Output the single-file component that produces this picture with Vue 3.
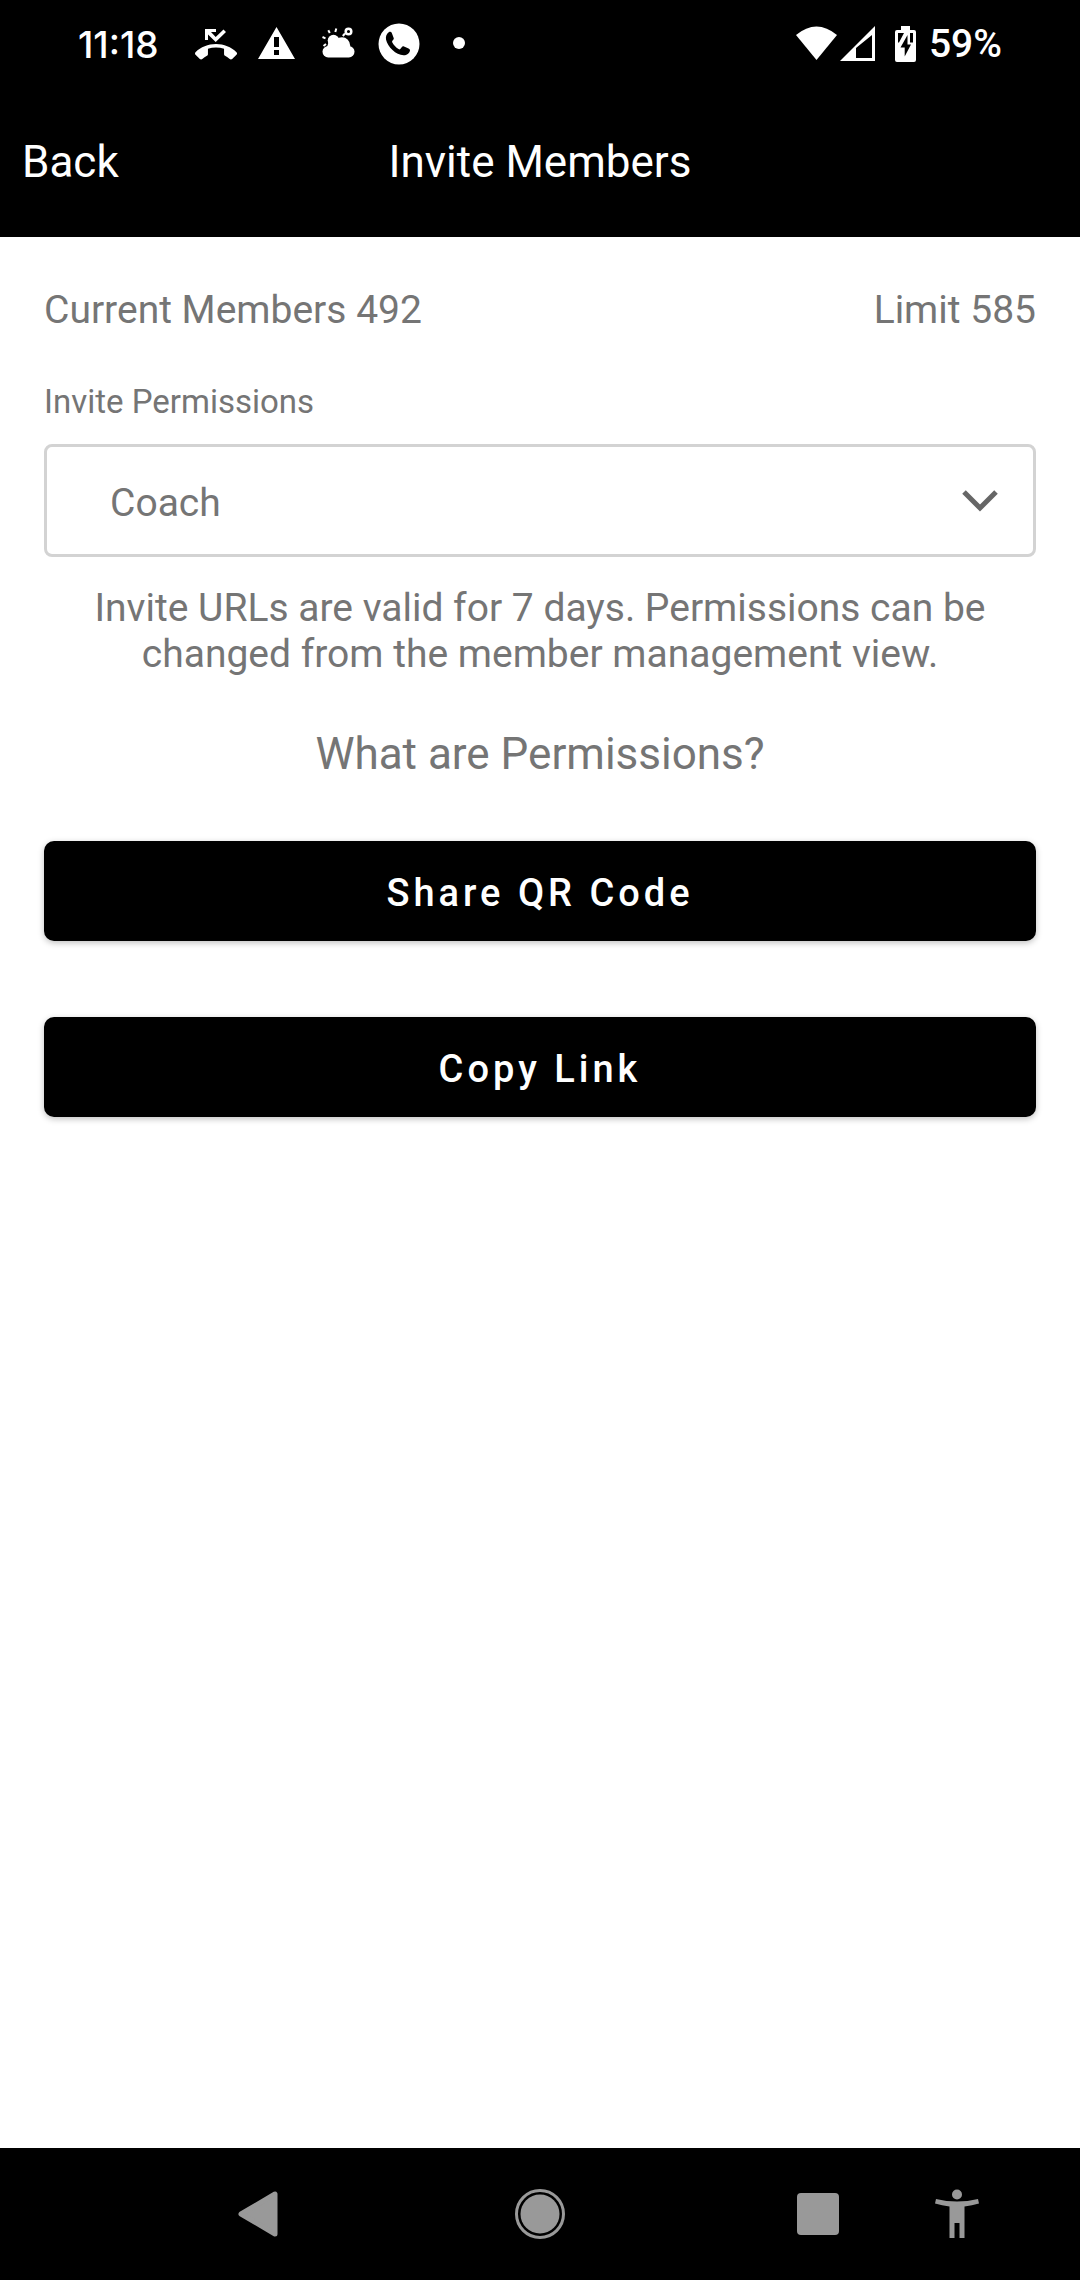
<script setup>
import { ref } from 'vue'

const permission = ref('Coach')
const permissions = ['Coach']
</script>

<template>
  <div class="screen">
    <div class="status">
      <div class="status-left">
        <span class="clock">11:18</span>
        <div class="notifications">
          <svg class="glyph" viewBox="0 0 42 42" aria-hidden="true">
            <path d="M10 6H21V9H16L20.700 14L28.500 6.500L31 9L20.700 19L13 11.500V17H10Z" />
            <path transform="scale(1.75)" d="M23.710 16.670C20.660 13.780 16.540 12 12 12 7.460 12 3.340 13.780.290 16.670c-.180.180-.290.430-.290.710 0 .280.110.530.290.710l2.480 2.480c.180.180.430.290.710.290.270 0 .520-.110.700-.280.790-.740 1.690-1.360 2.660-1.850.330-.160.560-.500.560-.900v-3.100c1.450-.480 3-.730 4.600-.730 1.600 0 3.150.250 4.600.720v3.100c0 .390.230.740.560.900.980.490 1.870 1.120 2.670 1.850.180.180.430.280.700.280.280 0 .530-.110.710-.290l2.480-2.480c.180-.180.290-.430.290-.710 0-.280-.120-.520-.300-.700z" />
          </svg>
          <svg class="glyph" viewBox="0 0 42 42" aria-hidden="true">
            <path fill-rule="evenodd" d="M20.500 4L39 36H2zM18 14v10h5V14zM18 27v5h5v-5z" />
          </svg>
          <svg class="glyph" viewBox="0 0 42 42" aria-hidden="true">
            <rect x="5.500" y="23" width="32" height="11.500" rx="5.700" />
            <circle cx="16.500" cy="17.500" r="5.800" />
            <circle cx="25" cy="22.500" r="8.200" />
            <path d="M10 24L12 18H30V28H10Z" />
            <path class="line thin" d="M5.500 14L8.500 15.300M11.300 7.300L12.800 10M19.300 5.500L18.300 9M25.800 13L28 10.500M6.500 23L9 21" />
            <circle class="line" cx="31.500" cy="8.500" r="2.800" />
          </svg>
          <svg class="glyph" viewBox="0 0 42 42" aria-hidden="true">
            <circle cx="21" cy="21" r="20.500" />
            <path class="cut" d="M11 9C8.500 10.500 7.500 13.500 8 16.500C9.500 24 18 32 25.500 32.300C28.500 32.500 31.500 30.500 32 27.500C32 26.500 31.500 26 30 25.300L26 23.500C25 23 24.300 23.500 23.500 24.500L22.300 26C21.800 26.500 21.300 26.500 20.500 26C18 24.500 15.500 22 14.200 19.300C13.900 18.500 14.200 18 14.800 17.300C15.500 16.500 16 16 15.700 15L13.800 10C13.300 8.700 12.300 8.400 11 9Z" />
          </svg>
          <svg class="glyph" viewBox="0 0 42 42" aria-hidden="true">
            <circle cx="20" cy="20" r="6" />
          </svg>
        </div>
      </div>
      <div class="status-right">
        <svg class="radio" viewBox="0 0 80 36" aria-hidden="true">
          <path d="M0 9Q20.500 -8 41 9L20.500 34Z" />
          <path fill-rule="evenodd" d="M44 35L79 0V35ZM60 22V32H76V9Z" />
        </svg>
        <svg class="battery" viewBox="0 0 21 36" aria-hidden="true">
          <path d="M6 0h9v4h4q2 0 2 2v28q0 2-2 2H2q-2 0-2-2V6q0-2 2-2h4z" />
          <path class="cut" d="M3 7H9L4 16.500H3ZM15 7H18V16.500H15ZM12.500 9V18.500H16L9.700 30.500V21.500H5.500Z" />
        </svg>
        <span class="level">59%</span>
      </div>
    </div>

    <header class="bar">
      <a class="back" href="#">Back</a>
      <h1 class="title">Invite Members</h1>
    </header>

    <main class="content">
      <div class="counts">
        <span>Current Members 492</span>
        <span>Limit 585</span>
      </div>
      <label class="label" for="permission">Invite Permissions</label>
      <div class="field">
        <select id="permission" v-model="permission" class="select">
          <option v-for="p in permissions" :key="p">{{ p }}</option>
        </select>
        <svg class="chevron" viewBox="0 0 36 22" aria-hidden="true">
          <path d="M2 2L18 18L34 2" />
        </svg>
      </div>
      <p class="note">Invite URLs are valid for 7 days. Permissions can be changed from the member management view.</p>
      <a class="help" href="#">What are Permissions?</a>
      <button class="action" type="button">Share QR Code</button>
      <button class="action" type="button">Copy Link</button>
    </main>

    <nav class="nav">
      <button class="key back-key" type="button" aria-label="Back">
        <svg viewBox="0 0 50 50"><path class="round" d="M40 5V45L6 25Z" /></svg>
      </button>
      <button class="key home-key" type="button" aria-label="Home">
        <svg viewBox="0 0 50 50"><circle cx="25" cy="25" r="19.500" /><circle class="ring" cx="25" cy="25" r="23.500" /></svg>
      </button>
      <button class="key recent-key" type="button" aria-label="Recent apps">
        <svg viewBox="0 0 50 50"><rect x="4" y="4" width="42" height="42" rx="4" /></svg>
      </button>
      <button class="key access-key" type="button" aria-label="Accessibility">
        <svg viewBox="0 0 50 50">
          <circle cx="25" cy="5.500" r="5" />
          <path d="M4 10Q25 15 46 10L47 14.500Q40 16.500 32.500 17.500V49H27.500V34H22.500V49H17.500V17.500Q10 16.500 3 14.500Z" />
        </svg>
      </button>
    </nav>
  </div>
</template>

<style>
body {
  margin: 0;
  background: #fff;
}
</style>

<style scoped>
.screen {
  display: flex;
  flex-direction: column;
  min-height: 100vh;
  font-family: Roboto, "Liberation Sans", sans-serif;
  font-size: 39px;
  color: #757575;
  background: #fff;
}

.status {
  display: flex;
  justify-content: space-between;
  align-items: center;
  height: 88px;
  padding: 0 78px;
  color: #fff;
  background: #000;
}

.status-left,
.status-right,
.notifications {
  display: flex;
  align-items: center;
}

.clock {
  min-width: 117px;
  font-family: Inter, Roboto, sans-serif;
  font-size: 37px;
  font-weight: 500;
}

.notifications {
  gap: 19px;
}

.glyph {
  width: 42px;
  height: 42px;
  fill: #fff;
}

.line {
  fill: none;
  stroke: #fff;
  stroke-width: 2.5;
}

.thin {
  stroke-width: 2;
}

.cut {
  fill: #000;
}

.radio {
  width: 80px;
  height: 36px;
  margin-right: 19px;
  fill: #fff;
}

.battery {
  width: 21px;
  height: 36px;
  margin-right: 13px;
  fill: #fff;
}

.level {
  font-weight: 500;
}

.bar {
  display: grid;
  grid-template-columns: 1fr auto 1fr;
  align-items: center;
  box-sizing: border-box;
  height: 149px;
  padding: 0 22px 2px;
  font-size: 44px;
  color: #fff;
  background: #000;
}

.back {
  color: inherit;
  text-decoration: none;
}

.title {
  margin: 0;
  font-size: 44px;
  font-weight: 400;
}

.content {
  display: flex;
  flex: 1;
  flex-direction: column;
  padding: 50px 44px 0;
}

.counts {
  display: flex;
  justify-content: space-between;
  line-height: 46px;
}

.label {
  margin-top: 49px;
  font-size: 33px;
  line-height: 40px;
}

.field {
  display: grid;
  align-items: center;
  margin-top: 22px;
}

.select {
  grid-area: 1 / 1;
  width: 100%;
  height: 113px;
  padding: 4px 63px 0;
  border: 3px solid #d3d3d3;
  border-radius: 8px;
  font: inherit;
  color: inherit;
  background: transparent;
  appearance: none;
}

.chevron {
  grid-area: 1 / 1;
  justify-self: end;
  width: 36px;
  height: 22px;
  margin-right: 38px;
  fill: none;
  stroke: #666;
  stroke-width: 5;
  pointer-events: none;
}

.note {
  margin: 28px 44px 0;
  line-height: 46px;
  text-align: center;
}

.help {
  align-self: center;
  margin-top: 51px;
  font-size: 44px;
  line-height: 52px;
  color: inherit;
  text-decoration: none;
}

.action {
  height: 100px;
  margin-top: 61px;
  padding: 4px 0 0;
  border: 0;
  border-radius: 10px;
  font-family: inherit;
  font-size: 38px;
  font-weight: 500;
  letter-spacing: 4px;
  color: #fff;
  background: #000;
  box-shadow: 0 2px 6px rgba(0, 0, 0, 0.25);
}

.action + .action {
  margin-top: 76px;
}

.nav {
  display: grid;
  grid-template-columns: 200fr 120px 160fr 120px 158fr 120px 19fr 120px 63fr;
  align-items: center;
  height: 132px;
  background: #000;
}

.key {
  display: flex;
  justify-content: center;
  padding: 0;
  border: 0;
  background: none;
}

.key svg {
  width: 50px;
  height: 50px;
  fill: #999;
}

.back-key {
  grid-column: 2;
}

.home-key {
  grid-column: 4;
}

.recent-key {
  grid-column: 6;
}

.access-key {
  grid-column: 8;
}

.round {
  stroke: #999;
  stroke-width: 5;
  stroke-linejoin: round;
}

.ring {
  fill: none;
  stroke: #999;
  stroke-width: 3;
}
</style>
